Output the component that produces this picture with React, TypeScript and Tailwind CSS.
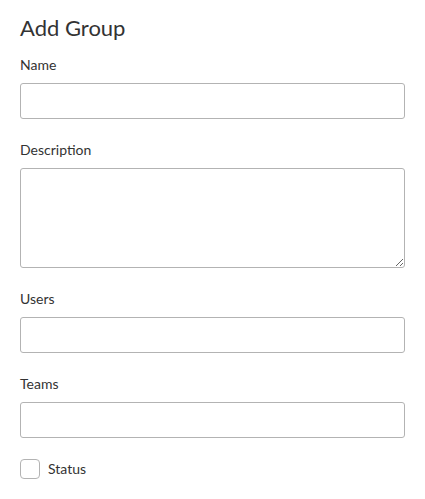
export default function App() {
  return (
    <div className="min-h-screen bg-white px-5 pt-3 text-[#333]" style={{ fontFamily: "Lato, 'Open Sans', sans-serif" }}>
      <h1 className="text-[22px] leading-8 font-normal">Add Group</h1>
      <form className="mt-[11px]">
        <Field label="Name" />
        <div className="mb-[21px]">
          <label className="mb-2 block text-[14px] leading-5">Description</label>
          <textarea className="block h-[100px] w-full rounded-[3px] border border-[#b3b3b3] bg-white" />
        </div>
        <Field label="Users" />
        <Field label="Teams" />
        <label className="flex items-center gap-2 text-[14px] leading-5">
          <input type="checkbox" className="h-5 w-5 appearance-none rounded-[4px] border border-[#b3b3b3] bg-white" />
          <span>Status</span>
        </label>
      </form>
    </div>
  );
}

function Field({ label }: { label: string }) {
  return (
    <div className="mb-[21px]">
      <label className="mb-2 block text-[14px] leading-5">{label}</label>
      <input type="text" className="block h-9 w-full rounded-[3px] border border-[#b3b3b3] bg-white" />
    </div>
  );
}
